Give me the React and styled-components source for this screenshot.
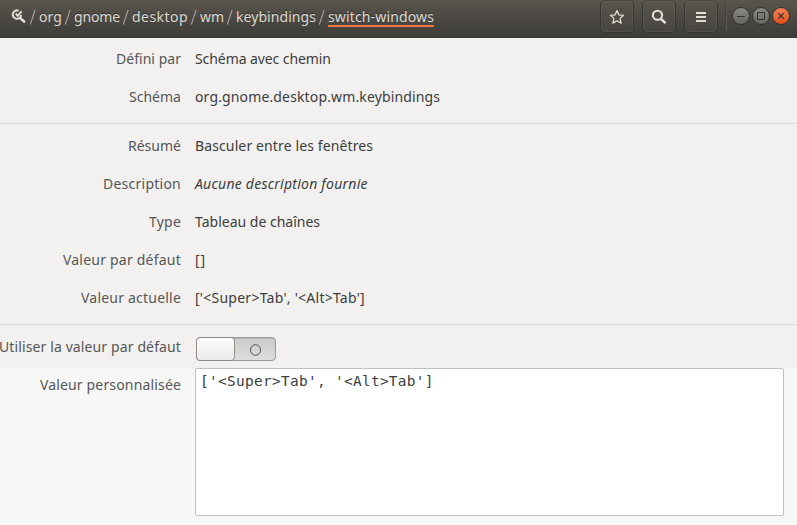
import React from "react";
import styled, { createGlobalStyle } from "styled-components";

const GlobalStyle = createGlobalStyle`
  * { box-sizing: border-box; }
  body {
    margin: 0;
    overflow: hidden;
    background: #f7f7f7;
    font: 14px/20px "Noto Sans", sans-serif;
    color: #3c3c3c;
  }
`;

const Window = styled.div`
  width: 797px;
  height: 525px;
  display: flex;
  flex-direction: column;
  overflow: hidden;
`;

const HeaderBar = styled.header`
  height: 38px;
  flex: none;
  display: flex;
  align-items: flex-start;
  justify-content: space-between;
  background: linear-gradient(#58554e, #3e3c38);
  border-bottom: 1px solid #393733;
  color: #dfdbd2;
`;

const Path = styled.nav`
  height: 34px;
  display: flex;
  align-items: center;
  padding-left: 11px;
  text-shadow: 0 -1px rgba(0, 0, 0, 0.4);
`;

const Crumb = styled.span`
  flex: none;
  width: ${(p) => p.$width}px;
  height: 20px;
  line-height: 19px;
  white-space: nowrap;
  letter-spacing: ${(p) => p.$tracking}px;
  box-shadow: ${(p) => (p.$current ? "0 -2px #f0793f inset" : "none")};
`;

const Slash = styled.svg`
  flex: none;
  width: 12px;
  height: 18px;
`;

const Actions = styled.div`
  display: flex;
`;

const HeaderButton = styled.button`
  width: 34px;
  height: 33px;
  margin-right: 8px;
  padding: 0;
  display: grid;
  place-items: center;
  border: 1px solid #383632;
  border-top-color: #484641;
  border-radius: 5px;
  background: linear-gradient(#57544d, #474540);
  box-shadow: inset 0 0 0 1px rgba(255, 255, 255, 0.06);
  color: #e2ded6;
`;

const Divider = styled.i`
  width: 2px;
  height: 29px;
  margin: 2px 5px 0 -1px;
  border-left: 1px solid #45433e;
  border-right: 1px solid #5a5750;
`;

const WindowButtons = styled.div`
  display: flex;
  gap: 2px;
  padding: 7px 7px 0 0;
`;

const WindowButton = styled.button`
  width: 18px;
  height: 18px;
  padding: 0;
  display: grid;
  place-items: center;
  border: 1px solid #32302c;
  border-radius: 50%;
  color: #33312d;
  background: ${(p) =>
    p.$close ? "linear-gradient(#f68457, #e0501e)" : "linear-gradient(#8a8882, #686660)"};
`;

const Group = styled.section`
  flex: none;
  padding: ${(p) => p.$top}px 0 ${(p) => p.$bottom}px;
  background: #f2f1f0;
  border-bottom: ${(p) => (p.$ruled ? "1px solid #dcdcdb" : "none")};
`;

const Row = styled.div`
  display: grid;
  grid-template-columns: 181px 1fr;
  column-gap: 14px;
  align-items: center;
  height: 38px;
`;

const Label = styled.span`
  justify-self: end;
  white-space: nowrap;
  color: #565656;
  letter-spacing: ${(p) => p.$tracking}px;
`;

const Value = styled.span`
  white-space: pre;
  letter-spacing: ${(p) => p.$tracking}px;
  font-style: ${(p) => (p.$italic ? "italic" : "normal")};
`;

const Switch = styled.button`
  width: 80px;
  height: 24px;
  margin: 3px 0 0 1px;
  padding: 0;
  display: flex;
  border: 1px solid #9c9a98;
  border-radius: 4px;
  background: linear-gradient(#cbcbca, #dededd);
  box-shadow: inset 0 1px 1px rgba(0, 0, 0, 0.12);
`;

const Knob = styled.i`
  width: 39px;
  height: 24px;
  margin: -1px 0 0 -1px;
  border: 1px solid #8f8d8b;
  border-radius: 4px;
  background: linear-gradient(#fdfdfd, #ebebea);
`;

const OffMark = styled.svg`
  width: 12px;
  height: 12px;
  margin: 6px 0 0 14px;
`;

const CustomRow = styled.section`
  flex: 1;
  display: grid;
  grid-template-columns: 181px 589px;
  column-gap: 14px;
  background: #f7f7f7;

  > ${Label} {
    padding-top: 7px;
  }
`;

const Editor = styled.div`
  height: 148px;
  padding: 3px 4px;
  border: 1px solid #c4c2c0;
  border-radius: 2px;
  background: #fff;
  font: 14.4px/19px "DejaVu Sans Mono", monospace;
  letter-spacing: 0.33px;
  white-space: pre;
`;

const crumbs = [
  ["org", 23, 0.09],
  ["gnome", 46, -0.14],
  ["desktop", 56, 0.45],
  ["wm", 24, -0.05],
  ["keybindings", 80, 0.06],
  ["switch-windows", 106, 0.14],
];

const schemaRows = [
  ["Défini par", 0.03, "Schéma avec chemin", -0.08],
  ["Schéma", 0.02, "org.gnome.desktop.wm.keybindings", 0.14],
];

const keyRows = [
  ["Résumé", 0.01, "Basculer entre les fenêtres", 0.12],
  ["Description", 0.24, "Aucune description fournie", 0.24, true],
  ["Type", 0.21, "Tableau de chaînes", 0],
  ["Valeur par défaut", 0.22, "[]", 0.9],
  ["Valeur actuelle", 0.21, "['<Super>Tab', '<Alt>Tab']", 0.25],
];

const PropertyRow = ({ data: [label, labelTracking, value, valueTracking, italic] }) => (
  <Row>
    <Label $tracking={labelTracking}>{label}</Label>
    <Value $tracking={valueTracking} $italic={italic}>{value}</Value>
  </Row>
);

const RootIcon = () => (
  <svg width="16" height="16" viewBox="0 0 16 16" fill="none" stroke="#e2ded6">
    <path d="M7.6 1.7A4.2 4.2 0 1 0 10.2 6" strokeWidth="2" />
    <path d="M8.6 8.6l5.4 4.6" strokeWidth="2.5" />
    <path d="M4.8 4.8l2 2 3.8-4.4" strokeWidth="2" />
  </svg>
);

export default function App() {
  return (
    <Window>
      <GlobalStyle />
      <HeaderBar>
        <Path>
          <RootIcon />
          {crumbs.map(([name, width, tracking], i) => (
            <React.Fragment key={name}>
              <Slash viewBox="0 0 12 18">
                <path d="M3.3 16.5L8.1 2" stroke="#a5a29b" strokeWidth="1.1" />
              </Slash>
              <Crumb $width={width} $tracking={tracking} $current={i === crumbs.length - 1}>
                {name}
              </Crumb>
            </React.Fragment>
          ))}
        </Path>
        <Actions>
          <HeaderButton aria-label="Signet">
            <svg width="16" height="16" viewBox="0 0 16 16" fill="none" stroke="currentColor" strokeWidth="1.25" strokeLinejoin="round">
              <path d="M8 1.6l1.9 4.2 4.7.5-3.5 3.1 1 4.7L8 11.7l-4.1 2.4 1-4.7-3.5-3.1 4.7-.5z" />
            </svg>
          </HeaderButton>
          <HeaderButton aria-label="Rechercher">
            <svg width="16" height="16" viewBox="0 0 16 16" fill="none" stroke="currentColor">
              <circle cx="6.5" cy="6.3" r="4.6" strokeWidth="2.1" />
              <path d="M9.7 9.7l4.8 4.4" strokeWidth="2.6" />
            </svg>
          </HeaderButton>
          <HeaderButton aria-label="Menu">
            <svg width="16" height="16" viewBox="0 0 16 16" fill="currentColor">
              <path d="M3 3h10v2H3zM3 7h10v2H3zM3 11h10v2H3z" />
            </svg>
          </HeaderButton>
          <Divider />
          <WindowButtons>
            <WindowButton aria-label="Réduire">
              <svg width="16" height="16" viewBox="0 0 16 16" stroke="currentColor"><path d="M4 8.5h8" /></svg>
            </WindowButton>
            <WindowButton aria-label="Agrandir">
              <svg width="16" height="16" viewBox="0 0 16 16" fill="none" stroke="currentColor"><path d="M4.5 4.5h7v7h-7z" /></svg>
            </WindowButton>
            <WindowButton aria-label="Fermer" $close>
              <svg width="16" height="16" viewBox="0 0 16 16" stroke="currentColor" strokeWidth="1.2"><path d="M5.2 5.2l5.6 5.6M10.8 5.2l-5.6 5.6" /></svg>
            </WindowButton>
          </WindowButtons>
        </Actions>
      </HeaderBar>
      <Group $top={2} $bottom={7} $ruled>
        {schemaRows.map((row) => <PropertyRow key={row[0]} data={row} />)}
      </Group>
      <Group $top={3} $bottom={7} $ruled>
        {keyRows.map((row) => <PropertyRow key={row[0]} data={row} />)}
      </Group>
      <Group $top={3} $bottom={2}>
        <Row>
          <Label $tracking={0.12}>Utiliser la valeur par défaut</Label>
          <Switch role="switch" aria-checked="false" aria-label="Utiliser la valeur par défaut">
            <Knob />
            <OffMark viewBox="0 0 12 12" fill="none" stroke="#555">
              <ellipse cx="6.5" cy="6" rx="5" ry="5.3" />
            </OffMark>
          </Switch>
        </Row>
      </Group>
      <CustomRow>
        <Label $tracking={0.16}>Valeur personnalisée</Label>
        <Editor>{"['<Super>Tab', '<Alt>Tab']"}</Editor>
      </CustomRow>
    </Window>
  );
}
